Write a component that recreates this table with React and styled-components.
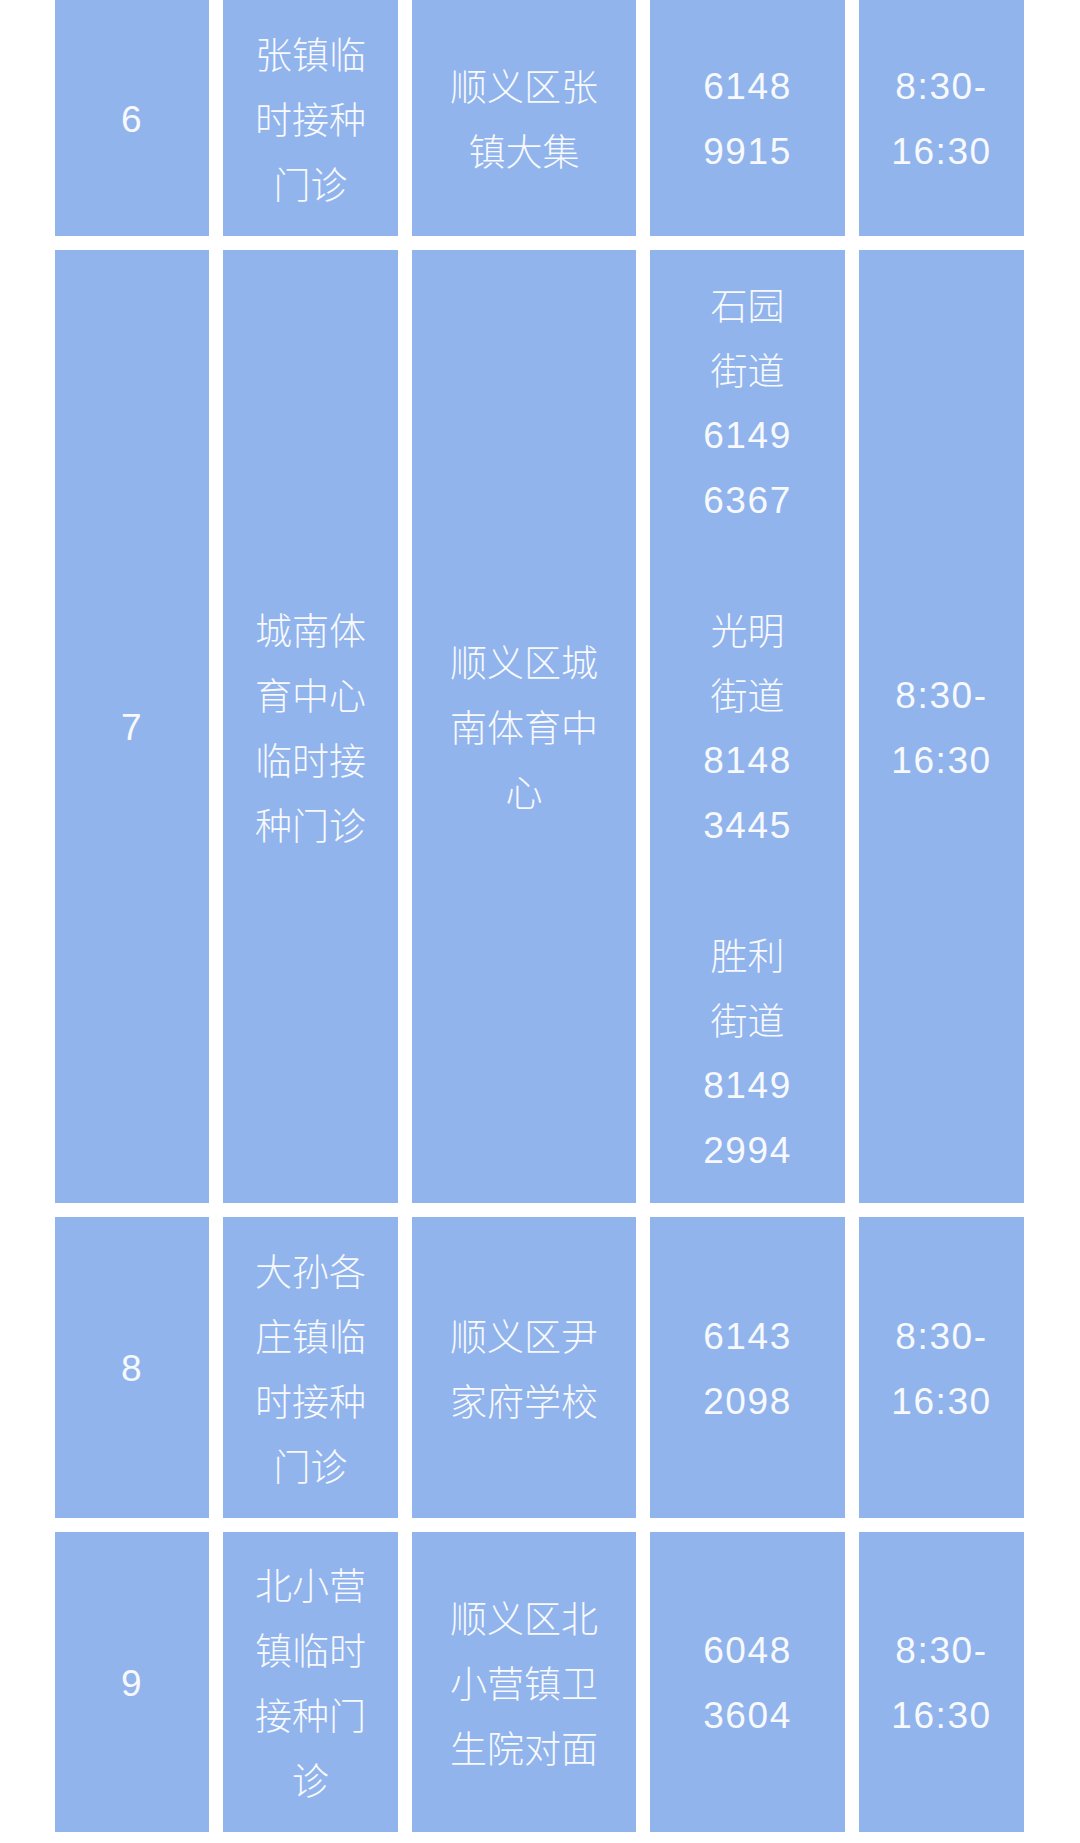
import React from 'react';
import styled, { createGlobalStyle } from 'styled-components';

const GlobalStyle = createGlobalStyle`
  html, body {
    margin: 0;
    padding: 0;
    background: #ffffff;
  }
`;

const Page = styled.div`
  width: 1080px;
  padding: 0 0 11px 55px;
  box-sizing: border-box;
  font-family: "Liberation Sans", "Noto Sans CJK SC", sans-serif;
`;

const Table = styled.div`
  display: grid;
  grid-template-columns: 154px 175px 224px 195px 165px;
  column-gap: 14px;
  row-gap: 14px;
`;

const Cell = styled.div`
  height: ${(p) => p.$height}px;
  background-color: #91b4ec;
  display: flex;
  flex-direction: column;
  align-items: center;
  justify-content: center;
  color: #f7f9fd;
  font-size: 37px;
  font-weight: 300;
`;

// digits are set a little looser and sit a little higher than the hanzi lines
const Line = styled.div`
  height: 65px;
  line-height: ${(p) => (p.$latin ? '67px' : '72px')};
  letter-spacing: ${(p) => (p.$latin ? '1.6px' : '0')};
  white-space: nowrap;
  text-align: center;
`;

const rows = [
  {
    height: 236,
    no: ['6'],
    name: ['张镇临', '时接种', '门诊'],
    addr: ['顺义区张', '镇大集'],
    phone: ['6148', '9915'],
    time: ['8:30-', '16:30'],
  },
  {
    height: 953,
    no: ['7'],
    name: ['城南体', '育中心', '临时接', '种门诊'],
    addr: ['顺义区城', '南体育中', '心'],
    phone: [
      '石园', '街道', '6149', '6367', '',
      '光明', '街道', '8148', '3445', '',
      '胜利', '街道', '8149', '2994',
    ],
    time: ['8:30-', '16:30'],
  },
  {
    height: 301,
    no: ['8'],
    name: ['大孙各', '庄镇临', '时接种', '门诊'],
    addr: ['顺义区尹', '家府学校'],
    phone: ['6143', '2098'],
    time: ['8:30-', '16:30'],
  },
  {
    height: 300,
    no: ['9'],
    name: ['北小营', '镇临时', '接种门', '诊'],
    addr: ['顺义区北', '小营镇卫', '生院对面'],
    phone: ['6048', '3604'],
    time: ['8:30-', '16:30'],
  },
];

const columns = ['no', 'name', 'addr', 'phone', 'time'];

const isLatin = (text) => /^[\d:\-]*$/.test(text);

const App = () => {
  return (
    <Page>
      <GlobalStyle />
      <Table>
        {rows.map((row, r) =>
          columns.map((key) => (
            <Cell key={`${r}-${key}`} $height={row.height}>
              {row[key].map((text, i) => (
                <Line key={i} $latin={isLatin(text)}>
                  {text}
                </Line>
              ))}
            </Cell>
          ))
        )}
      </Table>
    </Page>
  );
};

export default App;
